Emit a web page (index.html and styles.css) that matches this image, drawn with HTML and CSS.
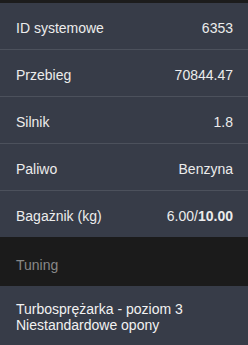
FILE: index.html
```html
<!DOCTYPE html>
<html lang="pl">
<head>
<meta charset="utf-8">
<link rel="stylesheet" href="styles.css">
</head>
<body>
<div class="panel">
  <div class="topbar"></div>
  <div class="row"><span class="label">ID systemowe</span><span class="value">6353</span></div>
  <div class="row"><span class="label">Przebieg</span><span class="value">70844.47</span></div>
  <div class="row"><span class="label">Silnik</span><span class="value">1.8</span></div>
  <div class="row"><span class="label">Paliwo</span><span class="value">Benzyna</span></div>
  <div class="row row-last"><span class="label">Bagażnik (kg)</span><span class="value">6.00/<b>10.00</b></span></div>
  <div class="section-head">Tuning</div>
  <div class="tuning">
    <div>Turbosprężarka - poziom 3</div>
    <div>Niestandardowe opony</div>
  </div>
</div>
</body>
</html>
```

FILE: styles.css
```css
html, body {
  margin: 0;
  padding: 0;
  background: #373c48;
}
body {
  width: 248px;
  height: 345px;
  overflow: hidden;
  font-family: "Liberation Sans", Arial, sans-serif;
  font-size: 14px;
  line-height: 16px;
  color: #ececec;
}
.panel {
  display: flex;
  flex-direction: column;
}
.topbar {
  height: 3px;
  background: #1c1c1c;
}
.row {
  display: flex;
  justify-content: space-between;
  padding: 17px 15px 13px 16px;
  border-bottom: 1px solid #4c515c;
}
.row-last {
  border-bottom: none;
}
.value b {
  font-weight: bold;
}
.section-head {
  background: #1b1b1b;
  color: #888888;
  padding: 20px 16px 13px;
}
.tuning {
  padding: 15px 16px 0;
  color: #f2f2f2;
}
```
